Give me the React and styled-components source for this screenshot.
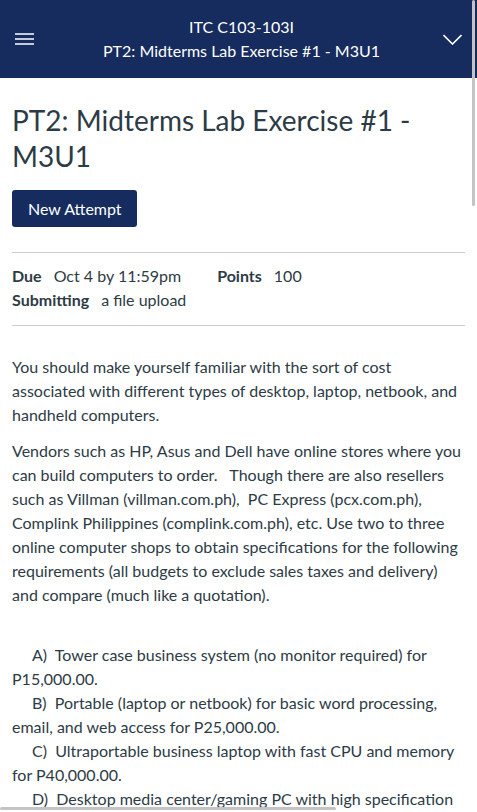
import React from 'react';
import styled, { createGlobalStyle } from 'styled-components';

const GlobalStyle = createGlobalStyle`
  html, body {
    margin: 0;
    padding: 0;
    background: #ffffff;
  }
  body {
    font-family: Lato, "Open Sans", "Liberation Sans", sans-serif;
    color: #2d3b45;
    overflow: hidden;
  }
  * {
    box-sizing: border-box;
  }
`;

const Page = styled.div`
  width: 477px;
  height: 812px;
  overflow: hidden;
  position: relative;
`;

const TopBar = styled.header`
  height: 78px;
  background: #162b5e;
  color: #ffffff;
  display: grid;
  grid-template-columns: 50px 1fr 50px;
  align-items: center;
`;

const IconButton = styled.button`
  background: none;
  border: none;
  padding: 0;
  height: 78px;
  display: flex;
  align-items: center;
  justify-content: ${(p) => (p.$end ? 'flex-end' : 'flex-start')};
  padding-left: ${(p) => (p.$end ? 0 : 15)}px;
  padding-right: ${(p) => (p.$end ? 15 : 0)}px;
  color: #ffffff;
  cursor: pointer;
`;

const TitleBlock = styled.div`
  text-align: center;
  font-size: 16px;
  line-height: 24px;
  padding-left: 6px;
`;

const Content = styled.main`
  padding: 0 12px;
`;

const Heading = styled.h1`
  margin: 24px 0 16px;
  font-size: 28px;
  line-height: 36px;
  font-weight: 400;
  color: #2d3b45;
  padding-right: 20px;
`;

const PrimaryButton = styled.button`
  display: block;
  height: 37px;
  padding: 0 15px 0 16px;
  background: #162b5e;
  color: #ffffff;
  border: none;
  border-radius: 3px;
  font-family: inherit;
  font-size: 16px;
  cursor: pointer;
`;

const Rule = styled.hr`
  margin: ${(p) => p.$top}px 0 0;
  border: none;
  border-top: 1px solid #c7cdd1;
  width: 453px;
`;

const Details = styled.div`
  padding-top: 11px;
  font-size: 16px;
  line-height: 24px;
`;

const DetailRow = styled.div`
  display: flex;
  gap: 36px;
`;

const DetailItem = styled.span`
  b {
    font-weight: 700;
    margin-right: 12px;
  }
`;

const Body = styled.div`
  margin-top: 29px;
  font-size: 16px;
  line-height: 24px;
  width: 453px;

  p {
    margin: 0 0 12px;
  }
`;

const ListItem = styled.span`
  display: block;
  text-indent: 20px;
`;

const ScrollThumb = styled.div`
  position: absolute;
  background: #c4c4c4;
  border-radius: 2px;
  ${(p) =>
    p.$vertical
      ? 'top: 0; right: 2px; width: 3px; height: 206px;'
      : 'bottom: 2px; left: 0; height: 3px; width: 336px;'}
`;

const Menu = () => (
  <svg width="19" height="12" viewBox="0 0 19 12" fill="none">
    <path d="M0 1h19M0 6h19M0 11h19" stroke="#fff" strokeWidth="1.5" />
  </svg>
);

const Chevron = () => (
  <svg width="19" height="11" viewBox="0 0 19 11" fill="none">
    <path d="M0.5 1l9 9 9-9" stroke="#fff" strokeWidth="1.6" />
  </svg>
);

const items = [
  'A)\u00a0 Tower case business system (no monitor required) for P15,000.00.',
  'B)\u00a0 Portable (laptop or netbook) for basic word processing, email, and web access for P25,000.00.',
  'C)\u00a0 Ultraportable business laptop with fast CPU and memory for P40,000.00.',
  'D)\u00a0 Desktop media center/gaming PC with high specification graphics and sound for P60,000.00.',
];

const App = () => {
  return (
    <Page>
      <GlobalStyle />
      <TopBar>
        <IconButton>
          <Menu />
        </IconButton>
        <TitleBlock>
          <div>ITC C103-103I</div>
          <div>PT2: Midterms Lab Exercise #1 - M3U1</div>
        </TitleBlock>
        <IconButton $end>
          <Chevron />
        </IconButton>
      </TopBar>

      <Content>
        <Heading>PT2: Midterms Lab Exercise #1 - M3U1</Heading>
        <PrimaryButton>New Attempt</PrimaryButton>
        <Rule $top={25} />
        <Details>
          <DetailRow>
            <DetailItem>
              <b>Due</b>Oct 4 by 11:59pm
            </DetailItem>
            <DetailItem>
              <b>Points</b>100
            </DetailItem>
          </DetailRow>
          <DetailRow>
            <DetailItem>
              <b>Submitting</b>a file upload
            </DetailItem>
          </DetailRow>
        </Details>
        <Rule $top={13} />

        <Body>
          <p>
            You should make yourself familiar with the sort of cost associated with different
            types of desktop, laptop, netbook, and handheld computers.
          </p>
          <p>
            Vendors such as HP, Asus and Dell have online stores where you can build computers to
            order.&nbsp;&nbsp; Though there are also resellers such as Villman (villman.com.ph),&nbsp;
            PC Express (pcx.com.ph), Complink Philippines (complink.com.ph), etc. Use two to three
            online computer shops to obtain specifications for the following requirements (all
            budgets to exclude sales taxes and delivery) and compare (much like a quotation).
            <br />
            <br />
          </p>
          <p>
            {items.map((text) => (
              <ListItem key={text}>{text}</ListItem>
            ))}
          </p>
        </Body>
      </Content>

      <ScrollThumb $vertical />
      <ScrollThumb />
    </Page>
  );
};

export default App;
